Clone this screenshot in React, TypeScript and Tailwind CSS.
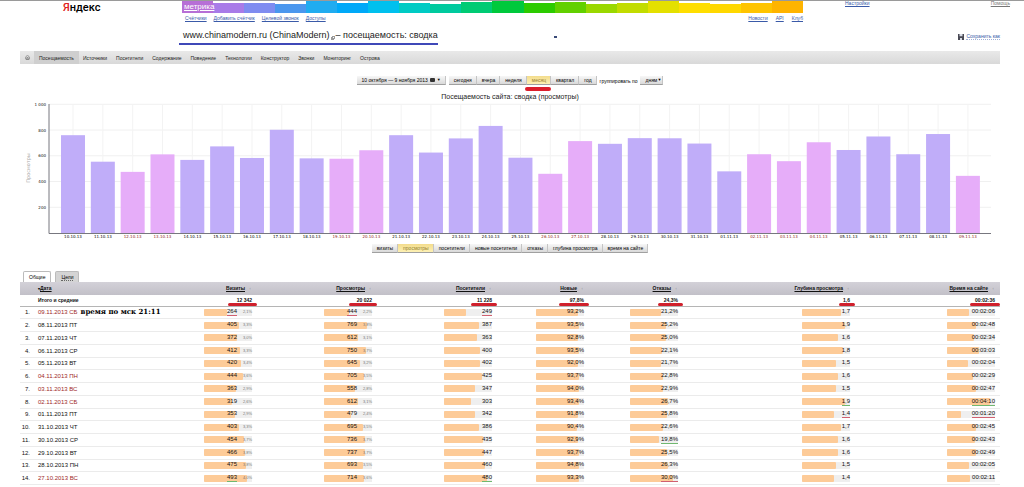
import { Home } from "lucide-react";
import clsx from "clsx";

type Mark = "low" | "high";

type DayRow = {
  date: string;
  holiday?: boolean;
  note?: string;
  values: string[];
  shares: string[];
  marks?: Record<number, Mark>;
};

const RAINBOW = [
  "h-3 bg-[#b76fd6]",
  "h-[10px] bg-[#a87be8]",
  "h-[10px] bg-[#7f8cf0]",
  "h-[9px] bg-[#4b97ee]",
  "h-3 bg-[#20acf0]",
  "h-[10px] bg-[#00a9f8]",
  "h-3 bg-[#00c0ee]",
  "h-[10px] bg-[#00cbc4]",
  "h-[9px] bg-[#00ca9e]",
  "h-[11px] bg-[#00cb74]",
  "h-3 bg-[#00c93c]",
  "h-[10px] bg-[#2ccb00]",
  "h-[11px] bg-[#62d000]",
  "h-[9px] bg-[#9ad800]",
  "h-[10px] bg-[#c2dc00]",
  "h-3 bg-[#e4e000]",
  "h-[10px] bg-[#ffde00]",
  "h-[9px] bg-[#ffd800]",
  "h-[10px] bg-[#ffc400]",
  "h-3 bg-[#ffb400]",
];

const SECTIONS = [
  "Источники",
  "Посетители",
  "Содержание",
  "Поведение",
  "Технологии",
  "Конструктор",
  "Звонки",
  "Мониторинг",
  "Острова",
];

const PERIODS = ["сегодня", "вчера", "неделя", "месяц", "квартал", "год"];

const METRICS = [
  "визиты",
  "просмотры",
  "посетители",
  "новые посетители",
  "отказы",
  "глубина просмотра",
  "время на сайте",
];

const CHART: [string, number, boolean?][] = [
  ["10.10.13", 760],
  ["11.10.13", 554],
  ["12.10.13", 475, true],
  ["13.10.13", 611, true],
  ["14.10.13", 568],
  ["15.10.13", 673],
  ["16.10.13", 583],
  ["17.10.13", 802],
  ["18.10.13", 580],
  ["19.10.13", 577, true],
  ["20.10.13", 643, true],
  ["21.10.13", 760],
  ["22.10.13", 625],
  ["23.10.13", 735],
  ["24.10.13", 832],
  ["25.10.13", 585],
  ["26.10.13", 460, true],
  ["27.10.13", 714, true],
  ["28.10.13", 693],
  ["29.10.13", 737],
  ["30.10.13", 736],
  ["31.10.13", 695],
  ["01.11.13", 479],
  ["02.11.13", 612, true],
  ["03.11.13", 558, true],
  ["04.11.13", 705, true],
  ["05.11.13", 645],
  ["06.11.13", 750],
  ["07.11.13", 612],
  ["08.11.13", 769],
  ["09.11.13", 444, true],
];

const COLUMNS = [
  { label: "Визиты", total: "12 342", max: 493, line: "w-[29px]" },
  { label: "Просмотры", total: "20 022", max: 769, line: "w-[28px]" },
  { label: "Посетители", total: "11 228", max: 480, line: "w-[26px]" },
  { label: "Новые", total: "97,8%", max: 94.8, line: "w-[30px]" },
  { label: "Отказы", total: "24,3%", max: 30, line: "w-[25px]" },
  { label: "Глубина просмотра", total: "1,6", max: 1.9, line: "w-4" },
  { label: "Время на сайте", total: "00:02:36", max: 250, line: "w-[30px]" },
];

const ROWS: DayRow[] = [
  { date: "09.11.2013 СБ", holiday: true, note: "время по мск 21:11", values: ["264", "444", "249", "93,2%", "21,2%", "1,7", "00:02:06"], shares: ["2,1%", "2,2%"], marks: { 0: "low", 1: "low", 2: "low" } },
  { date: "08.11.2013 ПТ", values: ["405", "769", "387", "93,5%", "25,2%", "1,9", "00:02:48"], shares: ["3,3%", "3,8%"] },
  { date: "07.11.2013 ЧТ", values: ["372", "612", "363", "92,8%", "25,0%", "1,6", "00:02:34"], shares: ["3,0%", "3,1%"] },
  { date: "06.11.2013 СР", values: ["412", "750", "400", "93,5%", "22,1%", "1,8", "00:03:03"], shares: ["3,3%", "3,7%"] },
  { date: "05.11.2013 ВТ", values: ["420", "645", "402", "92,0%", "21,7%", "1,5", "00:02:04"], shares: ["3,4%", "3,2%"] },
  { date: "04.11.2013 ПН", holiday: true, values: ["444", "705", "425", "93,7%", "22,8%", "1,6", "00:02:29"], shares: ["3,6%", "3,5%"] },
  { date: "03.11.2013 ВС", holiday: true, values: ["363", "558", "347", "94,0%", "22,9%", "1,5", "00:02:47"], shares: ["2,9%", "2,8%"] },
  { date: "02.11.2013 СБ", holiday: true, values: ["319", "612", "303", "93,4%", "26,7%", "1,9", "00:04:10"], shares: ["2,6%", "3,1%"], marks: { 5: "high", 6: "high" } },
  { date: "01.11.2013 ПТ", values: ["353", "479", "342", "91,8%", "25,8%", "1,4", "00:01:20"], shares: ["2,9%", "2,4%"], marks: { 5: "low", 6: "low" } },
  { date: "31.10.2013 ЧТ", values: ["403", "695", "386", "90,4%", "22,6%", "1,7", "00:02:45"], shares: ["3,3%", "3,5%"] },
  { date: "30.10.2013 СР", values: ["454", "736", "435", "92,9%", "19,8%", "1,6", "00:02:43"], shares: ["3,7%", "3,7%"], marks: { 4: "high" } },
  { date: "29.10.2013 ВТ", values: ["466", "737", "447", "93,7%", "25,5%", "1,6", "00:02:49"], shares: ["3,8%", "3,7%"] },
  { date: "28.10.2013 ПН", values: ["475", "693", "460", "94,8%", "26,3%", "1,5", "00:02:05"], shares: ["3,8%", "3,5%"] },
  { date: "27.10.2013 ВС", holiday: true, values: ["493", "714", "480", "93,3%", "30,0%", "1,4", "00:02:11"], shares: ["4,0%", "3,6%"], marks: { 0: "high", 2: "high", 4: "low" } },
];

const LINK_CLASS = "text-[#3a5aa8] underline";
const BUTTON_CLASS =
  "flex h-[9px] items-center justify-center border-r border-b border-r-[#c4c4c4] border-b-[#a0a0a0] bg-gradient-to-b pr-1 pl-[5px] whitespace-nowrap";
const IDLE_CLASS = "from-[#f7f7f7] to-[#d9d9d9]";
const ACTIVE_CLASS = "from-[#f3dc8c] to-[#fdf0b4] text-[#94802f]";

function toNumber(value: string) {
  if (value.includes(":")) {
    return value.split(":").reduce((sum, part) => sum * 60 + Number(part), 0);
  }
  return parseFloat(value.replace(",", "."));
}

function Header() {
  return (
    <header className="border-t border-[#9a9a9a]">
      <div className="flex items-start">
        <a href="#" className="ml-[63px] w-[119px] font-['Roboto','Open_Sans',sans-serif] text-[11px] leading-[14px] font-medium text-black">
          <span className="text-[#e02020]">Я</span>ндекс
        </a>
        <div className="flex-1">
          <div className="relative flex h-3 items-end">
            {RAINBOW.map((color) => (
              <div key={color} className={clsx("flex-1", color)} />
            ))}
            <a href="#" className="absolute left-[2px] text-[8px] leading-3 text-white underline">
              метрика
            </a>
          </div>
          <nav className="mt-[1px] flex justify-between pl-[3px] leading-2">
            <div className="flex gap-[7px]">
              <a href="#" className={LINK_CLASS}>Счётчики</a>
              <a href="#" className={LINK_CLASS}>Добавить счётчик</a>
              <a href="#" className={LINK_CLASS}>Целевой звонок</a>
              <a href="#" className={LINK_CLASS}>Доступы</a>
            </div>
            <div className="flex gap-2">
              <a href="#" className={LINK_CLASS}>Новости</a>
              <a href="#" className={LINK_CLASS}>API</a>
              <a href="#" className={LINK_CLASS}>Клуб</a>
            </div>
          </nav>
        </div>
        <div className="flex w-[221px] justify-between pr-[14px] pl-[42px] leading-[4px]">
          <a href="#" className={LINK_CLASS}>Настройки</a>
          <a href="#" className="text-[#777] underline">Помощь</a>
        </div>
      </div>
      <div className="mt-[6px] flex items-center pr-6 pl-[179px]">
        <h1 className="flex items-center border-b-2 border-[#3f48b8] pl-1 text-[9px] leading-[15px] whitespace-nowrap text-[#222]">
          www.chinamodern.ru (ChinaModern)
          <svg viewBox="0 0 4 4" className="mx-px mt-1 size-1" aria-hidden>
            <path d="M1 0h3v3H3v1H0V1h1z" fill="#9a9a9a" />
            <path d="M2 1h1v1H2z" fill="#fff" />
          </svg>
          – посещаемость: сводка
        </h1>
        <span className="ml-[116px] h-[2px] w-[3px] bg-[#3a4a78]" />
        <a href="#" className="ml-auto flex items-center gap-[2px] leading-[6px] text-[#3a5aa8]">
          <svg viewBox="0 0 6 6" className="size-[6px]" aria-hidden>
            <path d="M0 0h6v6H0z" fill="#4a4a55" />
            <path d="M1.5 0h3v2.3h-3zM2 4h2v2H2z" fill="#d8dce6" />
          </svg>
          <span className="border-b border-dotted border-[#9fb0d8]">Сохранить как</span>
        </a>
      </div>
    </header>
  );
}

function SectionNav() {
  return (
    <nav className="mt-[6px] flex h-[13px] items-center gap-[9px] bg-gradient-to-b from-[#e9e9e9] to-[#d9d9d9] text-[#222]">
      <a href="#" className="ml-[5px]" aria-label="Счётчики">
        <Home className="size-[5px] text-[#666]" strokeWidth={3} />
      </a>
      <a href="#" className="-mx-[5px] flex h-full items-center bg-[#cfcfcf] px-[5px]">Посещаемость</a>
      {SECTIONS.map((name) => (
        <a key={name} href="#">{name}</a>
      ))}
    </nav>
  );
}

function PeriodFilter() {
  return (
    <div className="mt-3 flex items-center justify-center gap-[3px] text-black">
      <button type="button" className={clsx(BUTTON_CLASS, IDLE_CLASS, "gap-[2px]")}>
        10 октября — 9 ноября 2013
        <span className="h-1 w-[5px] rounded-[1px] bg-[#333]" />
        <span className="text-[4px]">▼</span>
      </button>
      <div className="flex">
        {PERIODS.map((name) => (
          <div key={name} className="relative">
            <button type="button" className={clsx(BUTTON_CLASS, name === "месяц" ? ACTIVE_CLASS : IDLE_CLASS)}>
              {name}
            </button>
            {name === "месяц" && (
              <span className="absolute top-[11px] -left-[2px] h-1 w-[26px] rounded-full bg-[#dc1f2c]" />
            )}
          </div>
        ))}
      </div>
      <label htmlFor="group">группировать по</label>
      <div className="relative">
        <select id="group" className={clsx(BUTTON_CLASS, IDLE_CLASS, "w-[23px] appearance-none")}>
          <option>дням</option>
        </select>
        <span className="pointer-events-none absolute top-[2px] right-[2px] text-[4px] leading-1">▼</span>
      </div>
    </div>
  );
}

function PageviewsChart() {
  const step = 29.83;
  const scale = 0.1287;
  return (
    <svg viewBox="0 0 980 140" className="block w-full font-['DejaVu_Sans',sans-serif]" role="img" aria-label="Просмотры">
      {[200, 400, 600, 800, 1000].map((tick) => (
        <g key={tick}>
          <line x1="29" x2="971" y1={131 - tick * scale} y2={131 - tick * scale} stroke="#f0f0f0" />
          <text x="26" y={132.5 - tick * scale} textAnchor="end" fontSize="4" fill="#111">
            {tick === 1000 ? "1 000" : tick}
          </text>
        </g>
      ))}
      {CHART.map(([date, value, holiday], i) => {
        const center = 53 + i * step;
        return (
          <g key={date}>
            <line x1={center} x2={center} y1="2" y2="131" stroke="#f3f3f3" />
            <rect x={center - 12} y={131 - value * scale} width="24" height={value * scale} fill={holiday ? "#e6adf9" : "#c0adf9"} />
            <text x={center} y="136" textAnchor="middle" fontSize="4" fill={holiday ? "#901818" : "#000"}>
              {date}
            </text>
          </g>
        );
      })}
      <path d="M29 2V131.5H971" fill="none" stroke="#77777f" />
      <text transform="translate(10 66) rotate(-90)" textAnchor="middle" fontSize="5" fill="#aaa">
        Просмотры
      </text>
    </svg>
  );
}

function MetricTabs() {
  return (
    <div className="mt-[2px] flex justify-center text-black">
      {METRICS.map((name) => (
        <button key={name} type="button" className={clsx(BUTTON_CLASS, name === "просмотры" ? ACTIVE_CLASS : IDLE_CLASS)}>
          {name}
        </button>
      ))}
    </div>
  );
}

function ValueCell({ row, index }: { row: DayRow; index: number }) {
  const value = row.values[index];
  const share = row.shares[index];
  const mark = row.marks?.[index];
  const width = (toNumber(value) / COLUMNS[index].max) * 90;
  return (
    <td className="pr-[5px]">
      <div className="relative ml-auto h-[7px] w-12 bg-[#efefef]">
        <div className="h-full rounded-[1px] bg-[#fdcb98]" style={{ width: `${width}%` }} />
        <div className="absolute inset-0 flex items-center justify-end">
          <span
            className={clsx(
              "border-b leading-[7px]",
              mark === "low" && "border-[#d06070]",
              mark === "high" && "border-[#70b870]",
              !mark && "border-transparent",
            )}
          >
            {value}
          </span>
          {share && <span className="w-[15px] text-right text-[4px] text-[#777]">{share}</span>}
        </div>
      </div>
    </td>
  );
}

function StatsTable() {
  return (
    <table className="h-[203px] w-full table-fixed border-collapse text-[#111]">
      <colgroup>
        <col className="w-[14px]" />
        <col className="w-[143px]" />
        <col className="w-[80px]" />
        <col className="w-[120px]" />
        <col className="w-[120px]" />
        <col className="w-[92px]" />
        <col className="w-[94px]" />
        <col className="w-[172px]" />
        <col className="w-[145px]" />
      </colgroup>
      <thead>
        <tr className="h-[13px] bg-gradient-to-b from-[#d3d1d8] to-[#c2c0c8]">
          <th />
          <th className="pl-1 text-left">
            <span className="text-[4px]">▾</span>
            <a href="#" className="underline">Дата</a>
          </th>
          {COLUMNS.map((column) => (
            <th key={column.label} className="pr-[6px] text-right whitespace-nowrap">
              <a href="#" className="underline">{column.label}</a>
              <span className="inline-block w-[6px] text-[4px] font-normal text-[#888]">↑</span>
            </th>
          ))}
        </tr>
      </thead>
      <tbody>
        <tr className="h-[11px] border-b border-[#b5b5b5] font-bold">
          <td />
          <td className="pl-1">Итого и средние</td>
          {COLUMNS.map((column) => (
            <td key={column.label} className="relative pr-[5px] text-right">
              {column.total}
              <span className={clsx("absolute right-0 bottom-0 h-[3px] rounded-full bg-[#d0202c]", column.line)} />
            </td>
          ))}
        </tr>
        {ROWS.map((row, i) => (
          <tr key={row.date} className="border-b border-[#ebebeb] text-[6px]">
            <td className="pr-1 text-right">{i + 1}.</td>
            <td className="pl-1 whitespace-nowrap">
              <span className={clsx(row.holiday && "text-[#a02828]")}>{row.date}</span>
              {row.note && (
                <strong className="ml-[3px] font-['DejaVu_Serif',serif] text-[7px] leading-2 text-black">{row.note}</strong>
              )}
            </td>
            {COLUMNS.map((column, index) => (
              <ValueCell key={column.label} row={row} index={index} />
            ))}
          </tr>
        ))}
      </tbody>
    </table>
  );
}

export default function App() {
  return (
    <div className="min-h-screen bg-white font-['Liberation_Sans',Arial,sans-serif] text-[5px] leading-2">
      <Header />
      <main className="pr-6 pl-5">
        <SectionNav />
        <PeriodFilter />
        <h2 className="mt-[7px] text-center text-[7px] leading-[10px] text-[#222]">
          Посещаемость сайта: сводка (просмотры)
        </h2>
        <PageviewsChart />
        <MetricTabs />
        <div className="mt-[18px] flex items-end gap-1 pl-[3px]" role="tablist">
          <button type="button" role="tab" aria-selected className="h-[11px] rounded-t-[2px] border border-b-0 border-[#bbb] bg-white px-[5px]">
            Общие
          </button>
          <button type="button" role="tab" aria-selected={false} className="h-[11px] rounded-t-[2px] border border-b-0 border-[#bbb] bg-[#d4d4d4] px-[5px]">
            <span className="border-b border-dotted border-[#666]">Цели</span>
          </button>
        </div>
        <StatsTable />
      </main>
    </div>
  );
}
